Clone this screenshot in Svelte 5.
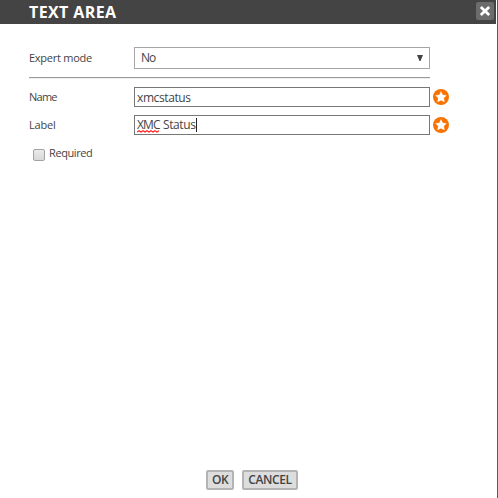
<script>
  let name = $state('xmcstatus');
  let required = $state(false);
</script>

{#snippet star()}
  <svg class="star" width="16" height="16" viewBox="0 0 16 16" aria-hidden="true">
    <circle cx="8" cy="8" r="8" fill="#f77200" />
    <path d="M8 2.5 9.7 5.9 13.4 6.4 10.8 9.1 11.4 12.9 8 11.2 4.6 12.9 5.2 9.1 2.6 6.4 6.3 5.9Z" fill="#fff" stroke="#fff" stroke-width=".3" stroke-linejoin="round" />
  </svg>
{/snippet}

<div class="dialog">
  <header>
    <h1>TEXT AREA</h1>
    <button class="close" aria-label="Close">
      <svg width="18" height="18" viewBox="0 0 18 18"><path d="M4.8 5 13.2 13M13.2 5 4.8 13" stroke="#fff" stroke-width="2.8" /></svg>
    </button>
  </header>
  <main>
    <div class="row expert">
      <span class="label mode">Expert mode</span>
      <div class="select"><span>No</span><svg width="6" height="6" viewBox="0 0 6 6"><path d="M0 0H6L3.5 6H2.5Z" fill="#444" /></svg></div>
    </div>
    <hr />
    <div class="row">
      <label class="label" for="name">Name</label>
      <input id="name" class="field" bind:value={name} />
      {@render star()}
    </div>
    <div class="row second">
      <span class="label lab">Label</span>
      <div class="field text"><span class="typo">XMC<svg width="22" height="3" viewBox="0 0 22 3"><path d="M0 2 2 .7 4 2 6 .7 8 2 10 .7 12 2 14 .7 16 2 18 .7 20 2 22 .7" fill="none" stroke="#f22" stroke-width="1.2" /></svg></span><span class="status">Status</span><i></i></div>
      {@render star()}
    </div>
    <label class="check"><input type="checkbox" bind:checked={required} /><span>Required</span></label>
  </main>
  <footer>
    <button class="ok">OK</button>
    <button class="cancel">CANCEL</button>
  </footer>
</div>

<style>
  .dialog {
    box-sizing: border-box;
    width: 498px;
    height: 498px;
    display: flex;
    flex-direction: column;
    padding-right: 1px;
    border-right: 1px solid #5b5b5b;
    background: #fff;
    color: #444;
    font: 11px/16px "Open Sans", sans-serif;
    overflow: hidden;
  }
  header {
    height: 24px;
    flex: none;
    display: flex;
    justify-content: space-between;
    background: #444;
    padding: 0 2px 0 29px;
  }
  h1 { margin: 0; color: #fff; font-size: 16px; line-height: 25px; font-weight: 700; letter-spacing: .4px; }
  .close { margin: 2px 0 0; padding: 0; width: 18px; height: 18px; border: 0; border-radius: 2px; background: #6c6c6c; }
  .close svg { display: block; }
  main { flex: 1; padding: 23px 0 0 29px; }
  .row { display: flex; align-items: center; height: 20px; }
  .expert { height: 22px; }
  .label { width: 105px; flex: none; letter-spacing: -.8px; }
  .label[for] { letter-spacing: -.75px; }
  .mode { letter-spacing: -.25px; }
  .lab { letter-spacing: -.2px; }
  .select {
    box-sizing: border-box;
    width: 296px;
    height: 22px;
    border: 1px solid #a6a6a6;
    display: flex;
    align-items: center;
    justify-content: space-between;
    padding: 0 6px;
    font-size: 12px;
    letter-spacing: -1px;
  }
  hr { box-sizing: border-box; width: 401px; height: 2px; margin: 8px 0 8px; border: 0; border-top: 1px solid #999; background: #eee; }
  .field {
    box-sizing: border-box;
    width: 296px;
    height: 20px;
    margin: 0 3px 0 0;
    padding: 0 2px;
    border: 1px solid #777;
    background: #fff;
    color: #444;
    font: 12px/18px "Open Sans", sans-serif;
    letter-spacing: -.4px;
    outline: none;
  }
  .second { margin-top: 8px; }
  .text { display: flex; align-items: center; }
  .typo { position: relative; width: 26px; letter-spacing: -.9px; }
  .typo svg { position: absolute; left: 0; bottom: 1px; }
  .status { width: 33px; letter-spacing: -.4px; }
  i { width: 1px; height: 14px; background: #222; }
  .check { display: flex; align-items: center; height: 16px; margin: 10px 0 0 4px; letter-spacing: -.4px; }
  .check input {
    appearance: none;
    box-sizing: border-box;
    width: 12px;
    height: 12px;
    margin: 3px 4px 0 0;
    border: 1px solid #a2a2a2;
    border-radius: 2px;
    background: linear-gradient(#eaeaea, #d8d8d8);
  }
  footer { display: flex; gap: 8px; height: 20px; margin: 0 0 8px 206px; }
  footer button {
    box-sizing: border-box;
    height: 20px;
    padding: 0;
    border: 2px solid #b4b4b4;
    border-radius: 2px;
    background: #ddd;
    color: #444;
    font: 600 12px/16px "Open Sans", sans-serif;
  }
  .ok { width: 28px; letter-spacing: -.6px; }
  .cancel { width: 56px; letter-spacing: -.4px; }
</style>
